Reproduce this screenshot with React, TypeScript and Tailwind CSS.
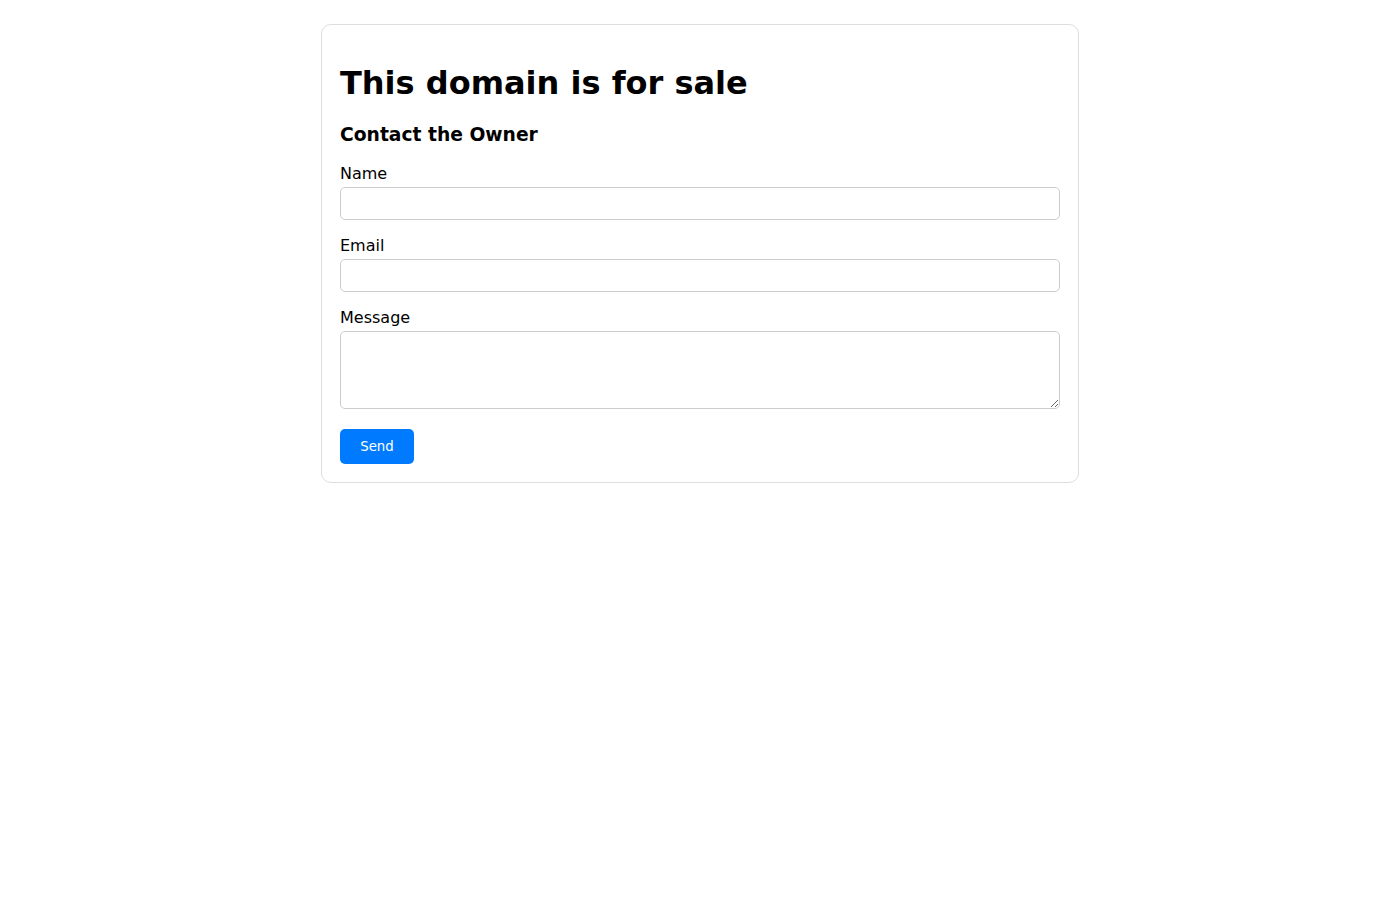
export default function App() {
  return (
    <div className="min-h-screen bg-white text-black">
      <div className="pt-6 font-['DejaVu_Sans',sans-serif]">
        <div className="mx-auto w-[758px] rounded-[10px] border border-[#dddddd] p-[18px]">
          <h1 className="mt-[22.44px] mb-[21.44px] text-[32px] font-bold leading-[1.164]">This domain is for sale</h1>
          <h3 className="mt-[18.72px] mb-[17.72px] text-[18.72px] font-bold leading-[1.164]">Contact the Owner</h3>
          <form onSubmit={(e) => e.preventDefault()}>
            <label className="mb-[4px] block pt-[1px] text-[16px] leading-[1.164]">Name</label>
            <input
              type="text"
              className="mb-[15px] block h-[33px] w-full rounded-[5px] border border-[#cccccc] px-2 text-[13.33px] outline-none"
            />
            <label className="mb-[3px] block pt-[2px] text-[16px] leading-[1.164]">Email</label>
            <input
              type="email"
              className="mb-[15px] block h-[33px] w-full rounded-[5px] border border-[#cccccc] px-2 text-[13.33px] outline-none"
            />
            <label className="mb-[3px] block pt-[2.5px] text-[16px] leading-[1.164]">Message</label>
            <textarea className="mb-[20px] block h-[78px] w-full resize-y rounded-[5px] border border-[#cccccc] p-2 text-[13.33px] outline-none" />
            <button
              type="submit"
              className="block h-[35px] w-[74px] rounded-[5px] bg-[#007bff] text-[13.33px] leading-none text-white"
            >
              Send
            </button>
          </form>
        </div>
      </div>
    </div>
  );
}
